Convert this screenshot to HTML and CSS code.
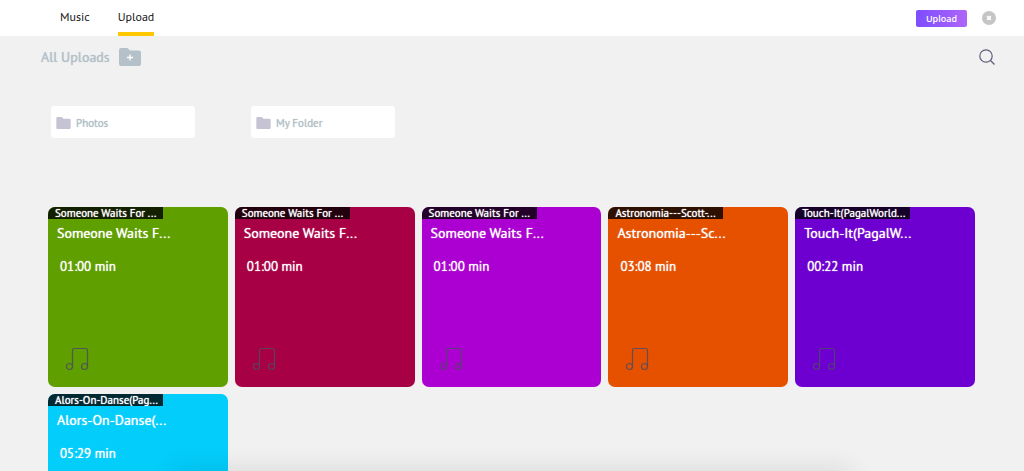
FILE: index.html
```html
<!DOCTYPE html>
<html lang="en">
<head>
<meta charset="utf-8">
<title>Uploads</title>
<link rel="stylesheet" href="styles.css">
</head>
<body>
<svg class="defs" aria-hidden="true">
  <symbol id="folder" viewBox="0 0 22 18"><path d="M2 0h6.500l2.500 2.500h9a2 2 0 0 1 2 2V16a2 2 0 0 1-2 2H2a2 2 0 0 1-2-2V2a2 2 0 0 1 2-2z" fill="currentColor"/></symbol>
  <symbol id="note" viewBox="0 0 24 24"><g fill="none" stroke="#4c4c63" stroke-opacity=".85" stroke-width="1.200"><circle cx="4.500" cy="19.500" r="3"/><circle cx="19.500" cy="19.500" r="3"/><path d="M7.500 19.500V3.500Q7.500 1.500 9.500 1.500H20.500Q22.500 1.500 22.500 3.500V19.500"/></g></symbol>
</svg>
<div class="app">
  <header class="topbar">
    <nav class="tabs">
      <a class="tab" href="#music">Music</a>
      <a class="tab active" href="#upload" aria-current="page">Upload</a>
    </nav>
    <div class="actions">
      <button class="upload" type="button">Upload</button>
      <button class="icon-button" type="button" aria-label="Close"><svg width="14" height="14" viewBox="0 0 14 14"><circle cx="7" cy="7" r="7" fill="#c5c5c5"/><path d="M5.200 5.200l3.600 3.600M8.800 5.200l-3.600 3.600" stroke="#fff" stroke-width="1.800"/></svg></button>
    </div>
  </header>
  <main>
    <div class="toolbar">
      <h1>All Uploads</h1>
      <button class="icon-button new-folder" type="button" aria-label="New folder"><svg width="22" height="18" viewBox="0 0 22 18"><use href="#folder"/><path d="M11 6.500v6M8 9.500h6" stroke="#fff" stroke-width="1.300"/></svg></button>
      <button class="icon-button search" type="button" aria-label="Search"><svg width="16" height="16" viewBox="0 0 16 16" fill="none" stroke="#5f5f7b" stroke-width="1.200"><circle cx="7" cy="7" r="6.200"/><path d="M11.500 11.500l4 4"/></svg></button>
    </div>
    <div class="folders">
      <a class="folder" href="#photos"><svg width="15" height="12" viewBox="0 0 22 18"><use href="#folder"/></svg><span>Photos</span></a>
      <a class="folder" href="#my-folder"><svg width="15" height="12" viewBox="0 0 22 18"><use href="#folder"/></svg><span>My Folder</span></a>
    </div>
    <div class="cards">
      <article class="card green"><span class="tag">Someone Waits For ...</span><h2>Someone Waits F...</h2><p>01:00 min</p><svg class="note"><use href="#note"/></svg></article>
      <article class="card crimson"><span class="tag">Someone Waits For ...</span><h2>Someone Waits F...</h2><p>01:00 min</p><svg class="note"><use href="#note"/></svg></article>
      <article class="card magenta"><span class="tag">Someone Waits For ...</span><h2>Someone Waits F...</h2><p>01:00 min</p><svg class="note"><use href="#note"/></svg></article>
      <article class="card orange"><span class="tag">Astronomia---Scott-...</span><h2>Astronomia---Sc...</h2><p>03:08 min</p><svg class="note"><use href="#note"/></svg></article>
      <article class="card violet"><span class="tag">Touch-It(PagalWorld...</span><h2>Touch-It(PagalW...</h2><p>00:22 min</p><svg class="note"><use href="#note"/></svg></article>
      <article class="card cyan"><span class="tag">Alors-On-Danse(Pag...</span><h2>Alors-On-Danse(...</h2><p>05:29 min</p><svg class="note"><use href="#note"/></svg></article>
    </div>
  </main>
  <div class="player-shade"></div>
</div>
</body>
</html>
```
FILE: styles.css
```css
* { box-sizing: border-box; }
body { margin: 0; font-family: "PT Sans", "Noto Sans", sans-serif; background: #f1f1f1; text-shadow: 0 0 1px currentColor; }
.defs { position: absolute; width: 0; height: 0; }
.app { position: relative; height: 100vh; overflow: hidden; }
a { text-decoration: none; }
svg { display: block; }
h1, h2, p { margin: 0; font-weight: 500; }
.topbar { display: flex; justify-content: space-between; height: 36px; padding: 0 28px 0 60px; background: #fff; }
.tabs { display: flex; gap: 28px; }
.tab { height: 36px; color: #161616; font-size: 12px; font-weight: 500; line-height: 33px; text-shadow: none; }
.tab.active { border-bottom: 4px solid #ffc800; }
.actions { display: flex; align-items: center; gap: 15px; }
.upload { width: 51px; height: 17px; padding: 0; border: 0; border-radius: 2px; background: linear-gradient(90deg, #7d4dff, #ae65f8); color: #fff; font: 600 9px/17px "Open Sans", sans-serif; }
.icon-button { padding: 0; border: 0; background: none; }
.toolbar { display: flex; align-items: center; height: 41px; padding: 0 29px 0 41px; }
h1 { color: #b2bfc7; font-size: 14px; line-height: 20px; }
.new-folder { margin-left: 9px; color: #b4c1c9; }
.search { margin-left: auto; }
.folders { display: flex; gap: 56px; padding: 29px 51px 0; }
.folder { display: flex; align-items: center; gap: 5px; width: 144px; height: 32px; padding: 2px 5px 0; border-radius: 3px; background: #fff; color: #c6c4d4; }
.folder span { color: #b2bfc7; font-size: 11px; font-weight: 500; line-height: 16px; }
.cards { display: grid; grid-template-columns: repeat(5, 1fr); gap: 7px; padding: 69px 49px 0 48px; }
.card { display: flex; flex-direction: column; align-items: flex-start; height: 180px; border-radius: 7px; overflow: hidden; color: #fff; }
.tag { width: 115px; height: 12px; padding-left: 7px; background: rgba(0, 0, 0, 0.8); font-size: 11px; font-weight: 500; line-height: 13px; white-space: nowrap; overflow: hidden; }
.card h2 { padding: 4px 0 0 9px; font-size: 14px; line-height: 20px; white-space: nowrap; }
.card p { padding: 14px 0 0 12px; font-size: 13px; line-height: 20px; }
.note { width: 24px; height: 24px; margin: auto 0 16px 17px; }
.green { background: #5f9f00; }
.crimson { background: #a80044; }
.magenta { background: #ab00d1; }
.orange { background: #e65100; }
.violet { background: #6d00d0; }
.cyan { background: #03cdfb; }
.player-shade { position: absolute; left: 17%; right: 17%; bottom: -10px; height: 10px; box-shadow: 0 0 24px 2px rgba(0, 0, 0, 0.12); }
```
